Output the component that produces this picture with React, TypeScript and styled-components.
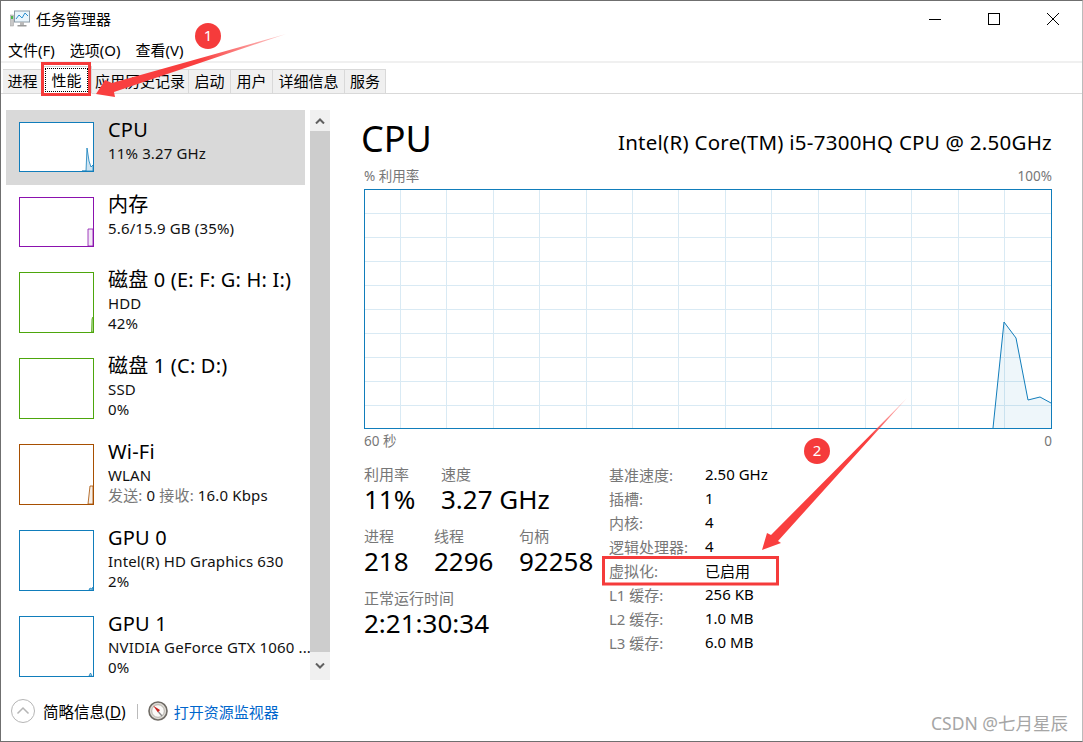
import React from 'react';
import styled, { createGlobalStyle } from 'styled-components';

const GlobalStyle = createGlobalStyle`
html, body {
    margin: 0;
    padding: 0;
    background: #fff;
}
body {
    font-family: "Noto Sans", "Noto Sans CJK SC", sans-serif;
    color: #000;
}
`;

const Page = styled.div`
position: relative;
width: 1083px;
height: 742px;
box-sizing: border-box;
border: 1px solid #6f6f6f;
border-right-color: #bbb;
background: #fff;
overflow: hidden;
display: flex;
flex-direction: column;
`;

const TitleBar = styled.div`
display: flex;
align-items: center;
height: 36px;
flex: none;
padding-left: 9px;
`;

const TitleText = styled.div`
font-size: 15px;
margin: 0 0 2px 6px;
flex: 1;
`;

const WindowButton = styled.div`
width: 59px;
height: 36px;
display: flex;
align-items: center;
justify-content: center;
`;

const MenuBar = styled.div`
display: flex;
gap: 15px;
height: 26px;
box-sizing: border-box;
flex: none;
align-items: center;
padding: 1px 0 0 7px;
font-size: 15px;
border-bottom: 2px solid #f0f0f0;
`;

const TabRow = styled.div`
display: flex;
align-items: flex-end;
height: 31px;
flex: none;
padding-left: 2px;
border-bottom: 1px solid #d9d9d9;
box-sizing: border-box;
`;

const Tab = styled.div<{ $active?: boolean; $w: number }>`
position: relative;
box-sizing: border-box;
width: ${({ $w }) => $w}px;
height: ${({ $active }) => ($active ? "28px" : "25px")};
margin-bottom: -1px;
font-size: 15px;
line-height: 23px;
text-align: center;
white-space: nowrap;
background: ${({ $active }) => ($active ? "#fff" : "#f0f0f0")};
border: 1px solid #d9d9d9;
border-left-width: ${({ $active }) => ($active ? "1px" : "0")};
border-bottom: ${({ $active }) => ($active ? "1px solid #fff" : "1px solid #d9d9d9")};
`;

const FocusLabel = styled.span`
display: block;
height: 24px;
line-height: 24px;
margin: 1px 3px 0 1px;
outline: 1px dotted #000;
outline-offset: -1px;
`;

const Body = styled.div`
display: flex;
flex: 1;
min-height: 0;
`;

const Sidebar = styled.div`
display: flex;
flex: none;
width: 329px;
padding: 16px 0 0 5px;
box-sizing: border-box;
`;

const SideList = styled.div`
width: 299px;
flex: none;
`;

const SideItem = styled.div<{ $active?: boolean }>`
display: flex;
box-sizing: border-box;
padding: 12px 0 13px 13px;
background: ${({ $active }) => ($active ? "#d9d9d9" : "transparent")};
`;

const Thumb = styled.div<{ $color: string; $tall?: boolean }>`
box-sizing: border-box;
flex: none;
width: 75px;
height: ${({ $tall }) => ($tall ? "61px" : "50px")};
border: 1px solid ${({ $color }) => $color};
background: #fff;
display: flex;
justify-content: flex-end;
align-items: flex-end;
`;

const SideText = styled.div`
margin-left: 14px;
min-width: 0;
margin-top: -6px;
`;

const SideTitle = styled.div`
font-size: 20px;
line-height: 27px;
letter-spacing: 0.2px;
white-space: nowrap;
`;

const SideSub = styled.div`
font-size: 15px;
line-height: 20px;
white-space: nowrap;
letter-spacing: 0.15px;
color: #111;
`;

const MutedSpan = styled.span`
color: #777;
`;

const Scrollbar = styled.div`
position: relative;
width: 20px;
height: 570px;
margin-left: 5px;
flex: none;
display: flex;
flex-direction: column;
background: #f0f0f0;
`;

const ScrollButton = styled.div<{ $h: number }>`
height: ${({ $h }) => $h}px;
flex: none;
display: flex;
align-items: center;
justify-content: center;
`;

const ScrollThumb = styled.div`
flex: 1;
background: #cdcdcd;
`;

const Main = styled.div`
flex: 1;
min-width: 0;
padding: 20px 30px 0 34px;
`;

const HeadRow = styled.div`
display: flex;
justify-content: space-between;
align-items: flex-end;
height: 50px;
`;

const Heading = styled.div`
font-size: 36px;
line-height: 50px;
margin-left: -3px;
`;

const CpuName = styled.div`
font-size: 20.5px;
letter-spacing: 0.25px;
line-height: 30px;
margin-bottom: 7px;
white-space: nowrap;
`;

const ChartLabels = styled.div`
display: flex;
justify-content: space-between;
font-size: 13.5px;
color: #777;
line-height: 18px;
`;

const ChartTop = styled(ChartLabels)`
margin: 3px 0 4px;
`;

const ChartBottom = styled(ChartLabels)`
margin-top: 3px;
`;

const ChartFrame = styled.div`
height: 240px;
box-sizing: border-box;
border: 1px solid #117dbb;
`;

const Details = styled.div`
display: flex;
margin-top: 12px;
`;

const StatsColumn = styled.div`
width: 245px;
flex: none;
padding-top: 3px;
`;

const StatRow = styled.div`
display: flex;
margin-bottom: 12px;
`;

const Stat = styled.div<{ $w: number }>`
width: ${({ $w }) => $w}px;
flex: none;
`;

const StatLabel = styled.div`
font-size: 15px;
line-height: 18px;
color: #777;
`;

const StatValue = styled.div`
font-size: 26px;
line-height: 32px;
white-space: nowrap;
`;

const InfoTable = styled.div`
display: grid;
grid-template-columns: 96px auto;
grid-auto-rows: 24px;
align-items: center;
font-size: 15px;
`;

const InfoLabel = styled.div`
color: #777;
`;

const InfoValue = styled.div`
color: #000;
`;

const Footer = styled.div`
display: flex;
align-items: center;
height: 60px;
flex: none;
padding-left: 10px;
font-size: 15px;
`;

const FooterLabel = styled.span`
margin-left: 8px;
font-size: 15.5px;
`;

const Underlined = styled.span`
text-decoration: underline;
`;

const Separator = styled.div`
width: 1px;
height: 15px;
background: #bbb;
margin: 0 10px 0 11px;
`;

const ResourceLink = styled.span`
color: #0066cc;
margin-left: 6px;
`;

const Annotations = styled.svg`
position: absolute;
left: -1px;
top: -1px;
width: 1083px;
height: 742px;
pointer-events: none;
`;

const BadgeNumber = styled.text`
font-family: "Noto Sans", sans-serif;
font-size: 15px;
fill: #fff;
text-anchor: middle;
`;

const Watermark = styled.div`
position: absolute;
right: 14px;
bottom: 6px;
font-size: 17.5px;
color: #a6a6a6;
`;

const tabs = [
    { name: "进程", w: 40 },
    { name: "性能", w: 49, active: true },
    { name: "应用历史记录", w: 97 },
    { name: "启动", w: 42 },
    { name: "用户", w: 42 },
    { name: "详细信息", w: 72 },
    { name: "服务", w: 41 },
];

const items = [
    { title: "CPU", sub: ["11%  3.27 GHz"], color: "#117dbb", fill: "#cfe4f1", points: "62,48 66,48 67,25 69,38 71,44 73,42 73,48", active: true },
    { title: "内存", sub: ["5.6/15.9 GB (35%)"], color: "#8b12ae", fill: "#f2e7f6", points: "68,48 68,31 73,31 73,48" },
    { title: "磁盘 0 (E: F: G: H: I:)", sub: ["HDD", "42%"], color: "#4da60c", fill: "#eef6e7", points: "71.5,59 72,46 73,44 73,59", tall: true },
    { title: "磁盘 1 (C: D:)", sub: ["SSD", "0%"], color: "#4da60c", fill: "#eef6e7", points: "", tall: true },
    { title: "Wi-Fi", sub: ["WLAN", "wifi"], color: "#a74f01", fill: "#f6eee6", points: "68,59 70,41 73,41 73,59", tall: true },
    { title: "GPU 0", sub: ["Intel(R) HD Graphics 630", "2%"], color: "#117dbb", fill: "#cfe4f1", points: "69,59 70,57 72,58 73,56 73,59", tall: true },
    { title: "GPU 1", sub: ["NVIDIA GeForce GTX 1060 ...", "0%"], color: "#117dbb", fill: "#cfe4f1", points: "69,59 70.5,56 72,59", tall: true },
];

const info = [
    ["基准速度:", "2.50 GHz"],
    ["插槽:", "1"],
    ["内核:", "4"],
    ["逻辑处理器:", "4"],
    ["虚拟化:", "已启用"],
    ["L1 缓存:", "256 KB"],
    ["L2 缓存:", "1.0 MB"],
    ["L3 缓存:", "6.0 MB"],
];

const verticals = [35, 81, 128, 174, 221, 267, 313, 360, 406, 453, 500, 546, 593, 639];
const horizontals = [23, 47, 71, 95, 119, 143, 167, 191, 215];

const CpuChart = () => (
    <svg width="686" height="238" viewBox="0 0 686 238" style={{ display: "block" }}>
        {verticals.map(x => <line key={x} x1={x + 0.5} y1="0" x2={x + 0.5} y2="238" stroke="#d9eaf4" />)}
        {horizontals.map(y => <line key={y} x1="0" y1={y + 0.5} x2="686" y2={y + 0.5} stroke="#d9eaf4" />)}
        <polygon points="628,238 639,132 651,148 663,210 675,207 686,213 686,238" fill="#117dbb" fillOpacity="0.07" />
        <polyline points="628,238 639,132 651,148 663,210 675,207 686,213" fill="none" stroke="#117dbb" strokeWidth="1" />
    </svg>
);

const Sparkline: React.FC<{ color: string, fill: string, points: string, tall?: boolean }> = ({ color, fill, points, tall }) => {
    const h = tall ? 59 : 48;
    return <svg width="73" height={h} viewBox={`0 0 73 ${h}`}>
        {points && <polygon points={points} fill={fill} stroke={color} strokeWidth="0.8" />}
    </svg>;
};

const AppIcon = () => (
    <svg width="20" height="18" viewBox="0 0 20 18">
        <rect x="0.5" y="5" width="3" height="11" fill="#c9c9c9" stroke="#9a9a9a" strokeWidth="0.5" />
        <rect x="1" y="6" width="2" height="3" fill="#4cb84c" />
        <rect x="4.5" y="1" width="15" height="11" fill="#eaf5fc" stroke="#8a9aa6" />
        <polyline points="6,9 9,5 12,8 15,3 18,6" fill="none" stroke="#2c8fd0" strokeWidth="1" />
        <rect x="10" y="12" width="4" height="3" fill="#b9b9b9" />
        <rect x="7.5" y="15" width="9" height="1.5" fill="#9a9a9a" />
    </svg>
);

const GaugeIcon = () => (
    <svg width="20" height="20" viewBox="0 0 20 20">
        <circle cx="10" cy="10" r="9" fill="#dedbd5" stroke="#6f6b65" strokeWidth="1.6" />
        <circle cx="10" cy="10" r="6.3" fill="#fbfaf8" stroke="#a8a49e" strokeWidth="0.8" />
        <polygon points="5,4.5 12,9 10,11.5" fill="#c9211e" />
        <line x1="10.5" y1="11" x2="14" y2="15" stroke="#8b8b8b" strokeWidth="1.4" />
    </svg>
);

const App: React.FC = () => {
    return <Page>
        <GlobalStyle />
        <TitleBar>
            <AppIcon />
            <TitleText>任务管理器</TitleText>
            <WindowButton>
                <svg width="12" height="12" viewBox="0 0 12 12"><line x1="0" y1="6.5" x2="12" y2="6.5" stroke="#000" /></svg>
            </WindowButton>
            <WindowButton>
                <svg width="12" height="12" viewBox="0 0 12 12"><rect x="0.5" y="0.5" width="11" height="11" fill="none" stroke="#000" /></svg>
            </WindowButton>
            <WindowButton>
                <svg width="12" height="12" viewBox="0 0 12 12"><path d="M0 0 L12 12 M12 0 L0 12" stroke="#000" /></svg>
            </WindowButton>
        </TitleBar>
        <MenuBar>
            <span>文件(F)</span>
            <span>选项(O)</span>
            <span>查看(V)</span>
        </MenuBar>
        <TabRow>
            {tabs.map(tab => (
                <Tab key={tab.name} $active={tab.active} $w={tab.w}>
                    {tab.active ? <FocusLabel>{tab.name}</FocusLabel> : tab.name}
                </Tab>
            ))}
        </TabRow>
        <Body>
            <Sidebar>
                <SideList>
                    {items.map(item => (
                        <SideItem key={item.title} $active={item.active}>
                            <Thumb $color={item.color} $tall={item.tall}>
                                <Sparkline color={item.color} fill={item.fill} points={item.points} tall={item.tall} />
                            </Thumb>
                            <SideText>
                                <SideTitle>{item.title}</SideTitle>
                                {item.sub.map(line => line === "wifi"
                                    ? <SideSub key={line}><MutedSpan>发送:</MutedSpan> 0 <MutedSpan>接收:</MutedSpan> 16.0 Kbps</SideSub>
                                    : <SideSub key={line}>{line}</SideSub>)}
                            </SideText>
                        </SideItem>
                    ))}
                </SideList>
                <Scrollbar>
                    <ScrollButton $h={21}>
                        <svg width="10" height="6" viewBox="0 0 10 6"><polyline points="1,5.5 5,1.5 9,5.5" fill="none" stroke="#606060" strokeWidth="2" /></svg>
                    </ScrollButton>
                    <ScrollThumb />
                    <ScrollButton $h={28}>
                        <svg width="10" height="6" viewBox="0 0 10 6"><polyline points="1,0.5 5,4.5 9,0.5" fill="none" stroke="#606060" strokeWidth="2" /></svg>
                    </ScrollButton>
                </Scrollbar>
            </Sidebar>
            <Main>
                <HeadRow>
                    <Heading>CPU</Heading>
                    <CpuName>Intel(R) Core(TM) i5-7300HQ CPU @ 2.50GHz</CpuName>
                </HeadRow>
                <ChartTop><span>% 利用率</span><span>100%</span></ChartTop>
                <ChartFrame><CpuChart /></ChartFrame>
                <ChartBottom><span>60 秒</span><span>0</span></ChartBottom>
                <Details>
                    <StatsColumn>
                        <StatRow>
                            <Stat $w={77}><StatLabel>利用率</StatLabel><StatValue>11%</StatValue></Stat>
                            <Stat $w={150}><StatLabel>速度</StatLabel><StatValue>3.27 GHz</StatValue></Stat>
                        </StatRow>
                        <StatRow>
                            <Stat $w={70}><StatLabel>进程</StatLabel><StatValue>218</StatValue></Stat>
                            <Stat $w={85}><StatLabel>线程</StatLabel><StatValue>2296</StatValue></Stat>
                            <Stat $w={80}><StatLabel>句柄</StatLabel><StatValue>92258</StatValue></Stat>
                        </StatRow>
                        <StatRow>
                            <Stat $w={200}><StatLabel>正常运行时间</StatLabel><StatValue>2:21:30:34</StatValue></Stat>
                        </StatRow>
                    </StatsColumn>
                    <InfoTable>
                        {info.map(([label, value]) => (
                            <React.Fragment key={label}>
                                <InfoLabel>{label}</InfoLabel>
                                <InfoValue>{value}</InfoValue>
                            </React.Fragment>
                        ))}
                    </InfoTable>
                </Details>
            </Main>
        </Body>
        <Footer>
            <svg width="24" height="24" viewBox="0 0 24 24">
                <circle cx="12" cy="12" r="11.5" fill="#fff" stroke="#b5b5b5" />
                <polyline points="6.5,14.5 12,9 17.5,14.5" fill="none" stroke="#b5b5b5" strokeWidth="1.5" />
            </svg>
            <FooterLabel>简略信息(<Underlined>D</Underlined>)</FooterLabel>
            <Separator />
            <GaugeIcon />
            <ResourceLink>打开资源监视器</ResourceLink>
        </Footer>
        <Watermark>CSDN @七月星辰</Watermark>
        <Annotations viewBox="0 0 1083 742">
            <defs>
                <linearGradient id="fade1" gradientUnits="userSpaceOnUse" x1="286" y1="34" x2="200" y2="60">
                    <stop offset="0" stopColor="#f93f3f" stopOpacity="0.25" />
                    <stop offset="1" stopColor="#f93f3f" />
                </linearGradient>
                <linearGradient id="fade2" gradientUnits="userSpaceOnUse" x1="907" y1="398" x2="870" y2="438">
                    <stop offset="0" stopColor="#f93f3f" stopOpacity="0.25" />
                    <stop offset="1" stopColor="#f93f3f" />
                </linearGradient>
            </defs>
            <rect x="42.5" y="63.5" width="47" height="31" fill="none" stroke="#f53b3b" strokeWidth="3" />
            <polygon points="286,34 114,92 115,97 96,94 105,80 112,83" fill="url(#fade1)" />
            <rect x="603.5" y="557.5" width="174" height="26.5" fill="none" stroke="#f53b3b" strokeWidth="3" />
            <polygon points="907,398 778,541 781,543 762,550 767,533 771,535" fill="url(#fade2)" />
            <circle cx="208" cy="36" r="13" fill="#f53b3b" />
            <BadgeNumber x="208" y="41">1</BadgeNumber>
            <circle cx="817" cy="451" r="13" fill="#f53b3b" />
            <BadgeNumber x="817" y="456">2</BadgeNumber>
        </Annotations>
    </Page>;
};

export default App;
